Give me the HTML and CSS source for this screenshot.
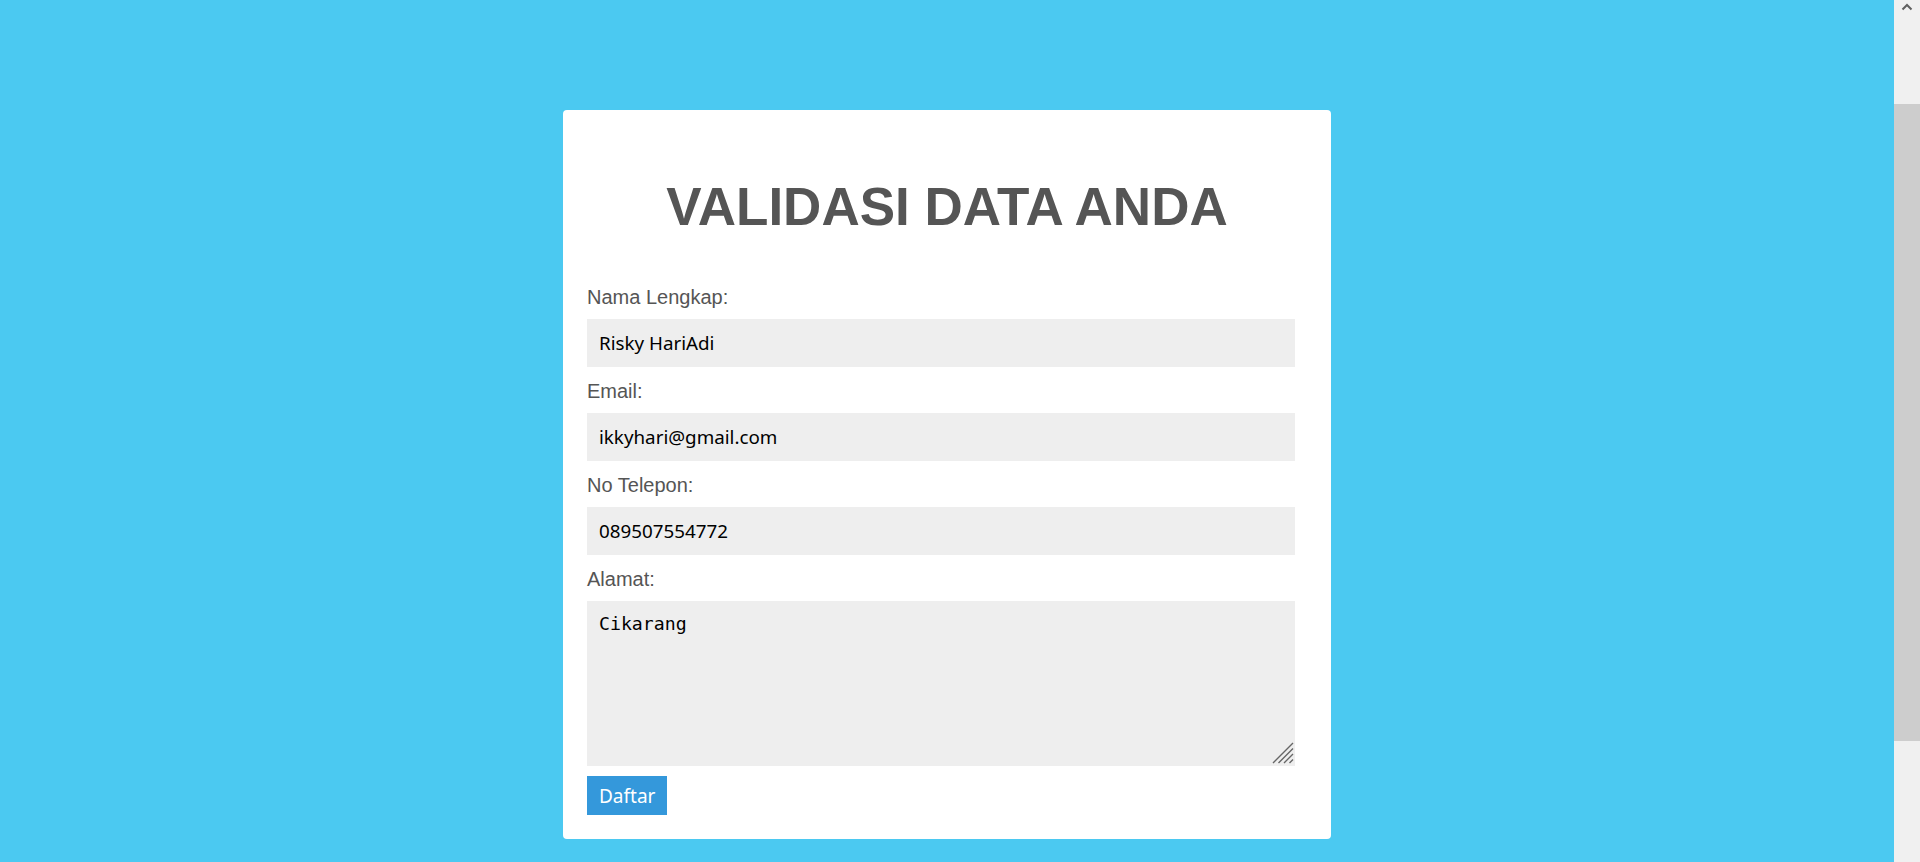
FILE: index.html
```html
<!DOCTYPE html>
<html lang="id">
<head>
<meta charset="utf-8">
<title>Validasi Data Anda</title>
<link rel="stylesheet" href="styles.css">
</head>
<body>
<div class="viewport">
  <div class="card">
    <h1 class="title">VALIDASI DATA ANDA</h1>
    <form class="form">
      <label class="label" for="nama">Nama Lengkap:</label>
      <input class="field" id="nama" type="text" value="Risky HariAdi">
      <label class="label" for="email">Email:</label>
      <input class="field" id="email" type="text" value="ikkyhari@gmail.com">
      <label class="label" for="tel">No Telepon:</label>
      <input class="field" id="tel" type="text" value="089507554772">
      <label class="label" for="alamat">Alamat:</label>
      <div class="area-wrap">
        <textarea class="area" id="alamat">Cikarang</textarea>
        <svg class="grip" width="22" height="22" viewBox="0 0 22 22"><path d="M1 21 L21 1 M6.5 21 L21 6.5 M12 21 L21 12 M17.5 21 L21 17.5" fill="none" stroke="#666666" stroke-width="1.4"/></svg>
      </div>
      <button class="btn" type="button">Daftar</button>
    </form>
  </div>
</div>
<div class="scrollbar">
  <div class="scroll-btn">
    <svg width="12" height="8" viewBox="0 0 12 8"><path d="M1.5 6.5 L6 2 L10.5 6.5" fill="none" stroke="#606060" stroke-width="2"/></svg>
  </div>
  <div class="scroll-thumb"></div>
</div>
</body>
</html>
```
FILE: styles.css
```css
html, body {
  margin: 0;
  padding: 0;
  height: 100%;
  overflow: hidden;
}
body {
  display: flex;
  background: #4bc9f1;
  font-family: "Liberation Sans", Arial, sans-serif;
}
.viewport {
  flex: 1;
  padding-top: 110px;
  background: #4bc9f1;
}
.card {
  width: 768px;
  box-sizing: border-box;
  margin: 0 auto;
  background: #ffffff;
  border-radius: 4px;
  padding: 67px 24px 24px 24px;
}
.title {
  margin: 0 0 49px 0;
  font-family: "Liberation Sans", Arial, sans-serif;
  font-weight: bold;
  font-size: 53px;
  line-height: 60px;
  color: #555555;
  text-align: center;
}
.form {
  display: flex;
  flex-direction: column;
  align-items: flex-start;
  margin: 0;
}
.label {
  display: block;
  font-size: 20px;
  line-height: 23px;
  color: #555555;
  margin-bottom: 10px;
}
.field {
  display: block;
  width: calc(100% - 12px);
  height: 48px;
  box-sizing: border-box;
  border: none;
  outline: none;
  background: #eeeeee;
  padding: 0 12px;
  margin: 0 0 13px 0;
  font-family: "Noto Sans", "Open Sans", sans-serif;
  font-size: 18.8px;
  color: #000000;
}
.area-wrap {
  position: relative;
  width: calc(100% - 12px);
  height: 165px;
  margin: 0 0 10px 0;
}
.area {
  display: block;
  width: 100%;
  height: 100%;
  box-sizing: border-box;
  border: none;
  outline: none;
  resize: none;
  background: #eeeeee;
  padding: 12px 12px;
  margin: 0;
  font-family: "DejaVu Sans Mono", "Liberation Mono", monospace;
  font-size: 18.2px;
  line-height: 22px;
  color: #000000;
}
.grip {
  position: absolute;
  right: 1px;
  bottom: 2px;
  pointer-events: none;
}
.btn {
  display: block;
  height: 39px;
  border: none;
  background: #3498db;
  color: #ffffff;
  padding: 0 12px;
  font-family: "Noto Sans", "Open Sans", sans-serif;
  font-size: 19px;
  cursor: pointer;
}
.scrollbar {
  width: 26px;
  flex: none;
  background: #f0f0f0;
  display: flex;
  flex-direction: column;
}
.scroll-btn {
  height: 17px;
  display: flex;
  justify-content: center;
  align-items: flex-start;
  padding-top: 3px;
  box-sizing: border-box;
}
.scroll-thumb {
  margin-top: 87px;
  height: 637px;
  background: #cdcdcd;
}
```
